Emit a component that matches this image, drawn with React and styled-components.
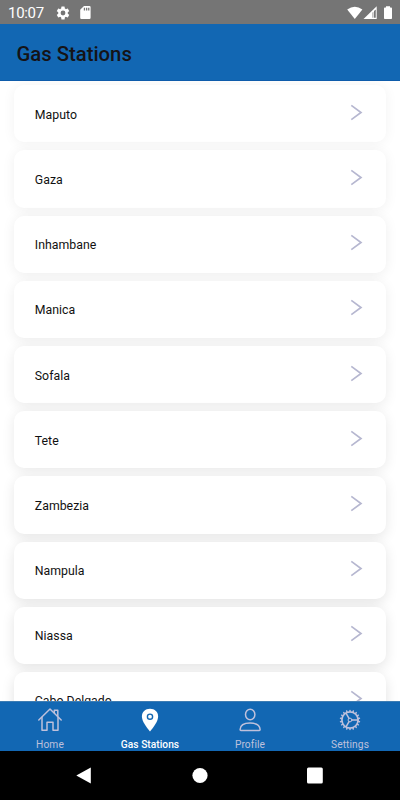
import styled, { createGlobalStyle } from 'styled-components'

const GlobalStyle = createGlobalStyle`
  * {
    box-sizing: border-box;
  }

  body {
    margin: 0;
    font-family: Roboto, sans-serif;
    background: #fff;
  }
`

const Screen = styled.div`
  width: 400px;
  height: 800px;
  display: flex;
  flex-direction: column;
  overflow: hidden;
`

const StatusBar = styled.div`
  height: 24px;
  flex-shrink: 0;
  display: flex;
  align-items: center;
  justify-content: space-between;
  padding: 1px 7px 0 8px;
  background: #757575;
  color: #fff;
`

const StatusGroup = styled.div`
  display: flex;
  align-items: center;
`

const Clock = styled.span`
  width: 46.5px;
  font-size: 15px;
  line-height: 24px;
  letter-spacing: -0.3px;
`

const StatusIcon = styled.svg`
  display: block;
  width: ${({ $width }) => $width}px;
  height: 16px;
  fill: currentColor;
`

const Header = styled.header`
  height: 57px;
  flex-shrink: 0;
  display: flex;
  align-items: center;
  padding: 3px 16px 0;
  background: #1267b3;
  border-bottom: 1px solid #0e5cab;
`

const Title = styled.h1`
  margin: 0;
  padding-left: 0.5px;
  font-size: 20.3px;
  font-weight: 500;
  color: #151316;
`

const List = styled.main`
  flex: 1;
  min-height: 0;
  overflow: hidden;
  display: flex;
  flex-direction: column;
  gap: 8px;
  padding: 4.2px 14.4px 0;
`

const Card = styled.div`
  height: 57.2px;
  flex-shrink: 0;
  display: flex;
  align-items: center;
  justify-content: space-between;
  padding: 0 23px 0 20.4px;
  border-radius: 10px;
  background: #fff;
  box-shadow: 0 ${({ $depth }) => 1 + $depth * 0.35}px 13px rgba(0, 0, 0, ${({ $depth }) => 0.055 + $depth * 0.007});
`

const CardLabel = styled.span`
  padding-top: 2px;
  font-size: 12.3px;
  letter-spacing: 0.02px;
  color: #111;
`

const Chevron = styled.svg`
  width: 13px;
  height: 17px;
  margin-bottom: 3px;
  fill: none;
  stroke: #b6b7d0;
  stroke-width: 1.7;
`

const TabBar = styled.nav`
  height: 50px;
  flex-shrink: 0;
  display: flex;
  background: #1267b3;
  border-top: 1px solid #3c7cb3;
`

const Tab = styled.div`
  flex: 1;
  display: flex;
  flex-direction: column;
  align-items: center;
  padding-top: 4.5px;
  color: ${({ $active }) => ($active ? '#fff' : '#bfc1dc')};
`

const TabIcon = styled.svg`
  width: 26px;
  height: 26px;
  fill: none;
  stroke: currentColor;
  stroke-width: 1.5;
  stroke-linecap: round;
  stroke-linejoin: round;
`

const TabLabel = styled.span`
  margin-top: 6.5px;
  font-size: 10.2px;
  line-height: 12px;
  font-weight: ${({ $active }) => ($active ? 500 : 400)};
  letter-spacing: ${({ $active }) => ($active ? 0.03 : 0.1)}px;
`

const SystemNav = styled.div`
  height: 49px;
  flex-shrink: 0;
  display: flex;
  align-items: center;
  justify-content: space-between;
  padding: 0 76px;
  background: #000;
`

const SystemIcon = styled.svg`
  width: 17px;
  height: 17px;
  fill: #fff;
`

const provinces = [
  'Maputo',
  'Gaza',
  'Inhambane',
  'Manica',
  'Sofala',
  'Tete',
  'Zambezia',
  'Nampula',
  'Niassa',
  'Cabo Delgado',
]

const HomeIcon = () => <TabIcon viewBox="0 0 26 26">
  <path d="M1.8 13 L13 2 L24.2 13" />
  <path d="M5 10.5 V23.2 H10 V15.3 H16 V23.2 H21 V10.5" />
  <path d="M17.3 5.8 V3.2 H20.8 V9.2" />
</TabIcon>

const PinIcon = () => <TabIcon viewBox="0 0 26 26">
  <path
    d="M13 1.8 C8.2 1.8 4.9 5 4.9 9.4 C4.9 14.2 9.3 19.8 13 24.4 C16.7 19.8 21.1 14.2 21.1 9.4 C21.1 5 17.8 1.8 13 1.8 Z"
    fill="currentColor"
    stroke="none"
  />
  <circle cx="13" cy="9.7" r="2.6" stroke="#1267b3" strokeWidth="1.4" />
</TabIcon>

const ProfileIcon = () => <TabIcon viewBox="0 0 26 26">
  <ellipse cx="13.2" cy="7.5" rx="4.7" ry="5.2" />
  <path d="M3.1 22.5 C3.3 18.2 7.2 16.1 13.1 16.1 C19 16.1 22.9 18.2 23.1 22.5 Q23.1 23.4 22.3 23.4 H3.9 Q3.1 23.4 3.1 22.5 Z" />
</TabIcon>

const teeth = Array.from({ length: 18 }, (_, i) => i * 20)

const SettingsIcon = () => <TabIcon viewBox="0 0 26 26">
  <circle cx="13" cy="13" r="8.1" strokeWidth="1.7" />
  <path d="M15 13 H21 M12 11.3 L9 6.1 M12 14.7 L9 19.9" strokeWidth="1.5" />
  <circle cx="13" cy="13" r="1.9" strokeWidth="1" />
  {teeth.map(angle => (
    <path key={angle} d="M13 4.1 V3.4" strokeWidth="1.5" transform={`rotate(${angle} 13 13)`} />
  ))}
</TabIcon>

const tabs = [
  { label: 'Home', Icon: HomeIcon },
  { label: 'Gas Stations', Icon: PinIcon, active: true },
  { label: 'Profile', Icon: ProfileIcon },
  { label: 'Settings', Icon: SettingsIcon },
]

const GearStatusIcon = () => <StatusIcon $width={16} viewBox="0 0 24 24">
  <path d="M19.14 12.94c.04-.3.06-.61.06-.94 0-.32-.02-.64-.07-.94l2.03-1.58a.49.49 0 0 0 .12-.61l-1.92-3.32a.49.49 0 0 0-.59-.22l-2.39.96a7 7 0 0 0-1.62-.94l-.36-2.54a.48.48 0 0 0-.48-.41h-3.84a.48.48 0 0 0-.47.41l-.36 2.54a7 7 0 0 0-1.62.94l-2.39-.96a.48.48 0 0 0-.59.22L2.74 8.87a.48.48 0 0 0 .12.61l2.03 1.58a6 6 0 0 0 0 1.88l-2.03 1.58a.49.49 0 0 0-.12.61l1.92 3.32c.12.22.37.29.59.22l2.39-.96c.5.38 1.03.7 1.62.94l.36 2.54c.05.24.24.41.48.41h3.84c.24 0 .44-.17.47-.41l.36-2.54a7 7 0 0 0 1.62-.94l2.39.96c.22.08.47 0 .59-.22l1.92-3.32a.48.48 0 0 0-.12-.61zM12 15.6a3.6 3.6 0 1 1 0-7.2 3.6 3.6 0 0 1 0 7.2z" />
</StatusIcon>

const SdCardIcon = () => <StatusIcon $width={28} viewBox="0 0 28 16">
  <path fillRule="evenodd" d="M13 0.9 H18.4 Q19.6 0.9 19.6 2.1 V12.8 Q19.6 14 18.4 14 H10.3 Q9.2 14 9.2 12.8 V4.7 Z M12.8 2.8 V5.5 H14.1 V2.8 Z M15 2.8 V5.5 H16.3 V2.8 Z M17.1 2.8 V5.5 H18.4 V2.8 Z" />
</StatusIcon>

const WifiIcon = () => <StatusIcon $width={16} viewBox="0 0 16 16">
  <path d="M0.2 4.6 Q7.8 -1.2 15.4 4.6 L7.8 14 Z" />
</StatusIcon>

const SignalIcon = () => <StatusIcon $width={20} viewBox="0 0 20 16">
  <path d="M13.7 1.2 V14 H0.5 Z" />
  <path d="M12.6 4.6 L11.2 6 V12.8 H12.6 Z" fill="#555" />
  <path d="M9.4 7.8 L10.4 6.8 V12.8 H9.4 Z" fill="#999" />
</StatusIcon>

const BatteryIcon = () => <StatusIcon $width={10} viewBox="0 0 10 16">
  <path d="M3 1.2 H7 V2.6 H8.2 Q9 2.6 9 3.4 V13.2 Q9 14 8.2 14 H1.8 Q1 14 1 13.2 V3.4 Q1 2.6 1.8 2.6 H3 Z" />
</StatusIcon>

const App = () => {
  return <Screen>
    <GlobalStyle />
    <StatusBar>
      <StatusGroup>
        <Clock>10:07</Clock>
        <GearStatusIcon />
        <SdCardIcon />
      </StatusGroup>
      <StatusGroup>
        <WifiIcon />
        <SignalIcon />
        <BatteryIcon />
      </StatusGroup>
    </StatusBar>
    <Header>
      <Title>Gas Stations</Title>
    </Header>
    <List>
      {provinces.map((name, index) => (
        <Card key={name} $depth={index}>
          <CardLabel>{name}</CardLabel>
          <Chevron viewBox="0 0 13 17">
            <path d="M1.3 1.4 L11 8.5 L1.3 15.6" />
          </Chevron>
        </Card>
      ))}
    </List>
    <TabBar>
      {tabs.map(({ label, Icon, active }) => (
        <Tab key={label} $active={active}>
          <Icon />
          <TabLabel $active={active}>{label}</TabLabel>
        </Tab>
      ))}
    </TabBar>
    <SystemNav>
      <SystemIcon viewBox="0 0 17 17">
        <path d="M14.8 0.6 V16.4 L0.3 8.5 Z" />
      </SystemIcon>
      <SystemIcon viewBox="0 0 17 17">
        <circle cx="8" cy="8.5" r="7.6" />
      </SystemIcon>
      <SystemIcon viewBox="0 0 17 17">
        <rect x="0" y="0.6" width="15.8" height="15.8" rx="1.5" />
      </SystemIcon>
    </SystemNav>
  </Screen>
}

export default App
